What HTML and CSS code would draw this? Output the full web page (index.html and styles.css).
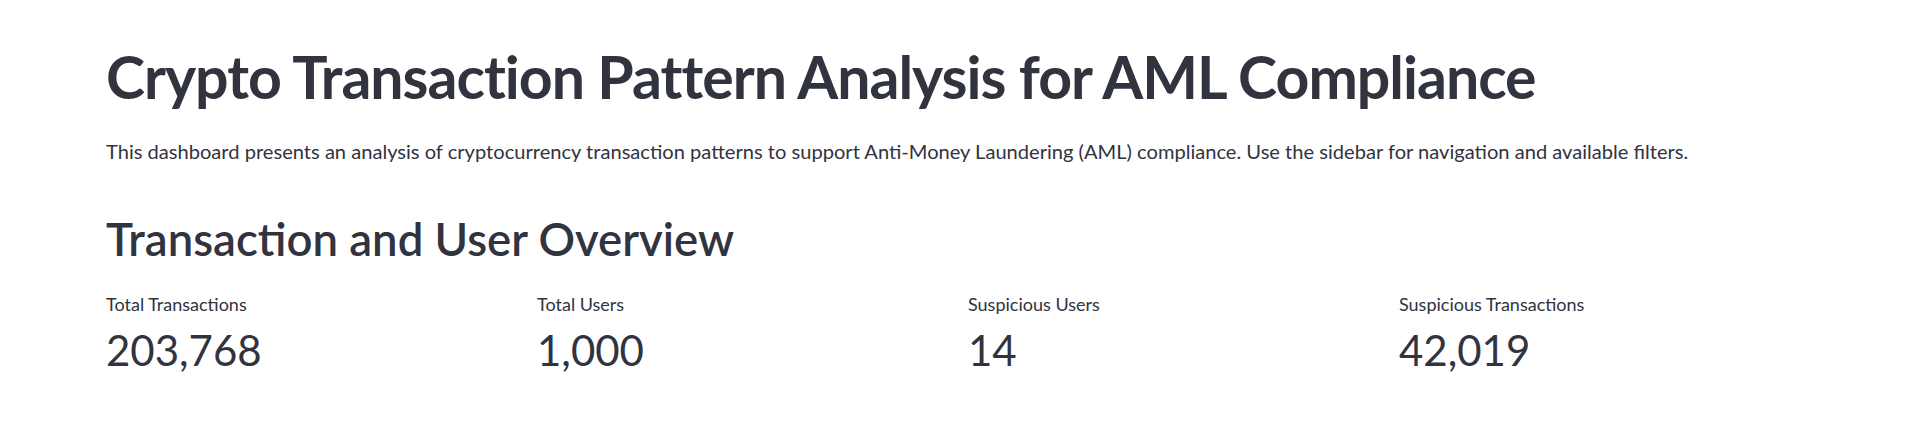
FILE: index.html
```html
<!DOCTYPE html>
<html lang="en">
<head>
<meta charset="utf-8">
<title>Crypto Transaction Pattern Analysis for AML Compliance</title>
<link rel="stylesheet" href="styles.css">
</head>
<body>
<main class="main">
  <h1 class="title">Crypto Transaction Pattern Analysis for AML Compliance</h1>
  <p class="intro">This dashboard presents an analysis of cryptocurrency transaction patterns to support Anti-Money Laundering (AML) compliance. Use the sidebar for navigation and available filters.</p>
  <h2 class="section">Transaction and User Overview</h2>
  <div class="metrics">
    <div class="metric">
      <div class="metric-label">Total Transactions</div>
      <div class="metric-value">203,768</div>
    </div>
    <div class="metric">
      <div class="metric-label">Total Users</div>
      <div class="metric-value">1,000</div>
    </div>
    <div class="metric">
      <div class="metric-label">Suspicious Users</div>
      <div class="metric-value">14</div>
    </div>
    <div class="metric">
      <div class="metric-label">Suspicious Transactions</div>
      <div class="metric-value">42,019</div>
    </div>
  </div>
</main>
</body>
</html>
```

FILE: styles.css
```css
html, body {
  margin: 0;
  padding: 0;
  background: #ffffff;
}
body {
  font-family: "Lato", "Noto Sans", sans-serif;
  color: #31333f;
}
.main {
  padding: 42px 105px 0 106px;
}
.title {
  margin: 0;
  font-size: 59px;
  font-weight: 700;
  letter-spacing: -1px;
  line-height: 70px;
}
.intro {
  margin: 24px 0 0 0;
  font-size: 20.1px;
  line-height: 30px;
}
.section {
  margin: 46px 0 0 0;
  font-size: 45.5px;
  font-weight: 600;
  line-height: 54px;
}
.metrics {
  margin-top: 26px;
  display: grid;
  grid-template-columns: repeat(4, 1fr);
  gap: 16px;
}
.metric-label {
  font-size: 18px;
  line-height: 24px;
}
.metric-value {
  margin-top: 8px;
  font-size: 42px;
  line-height: 52px;
}
```
